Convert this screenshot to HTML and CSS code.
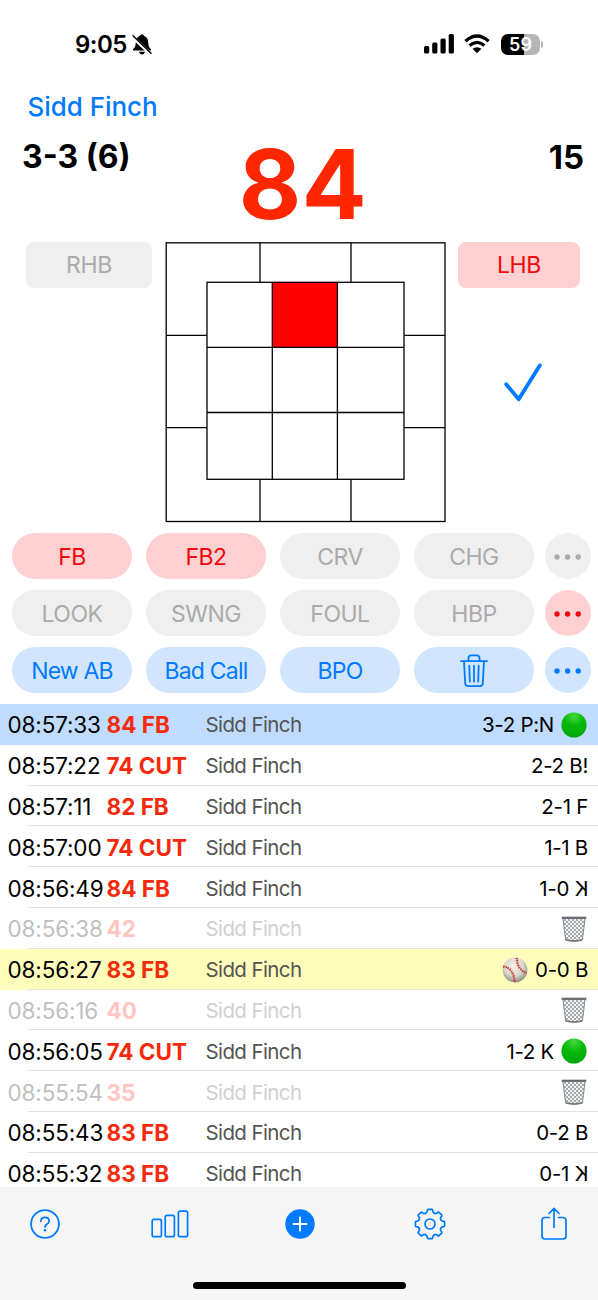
FILE: index.html
```
<!DOCTYPE html>
<html lang="en">
<head>
<meta charset="utf-8">
<title>Pitch Log</title>
<link rel="stylesheet" href="styles.css">
</head>
<body>
<svg width="0" height="0" class="defs">
  <defs>
    <radialGradient id="green" cx=".5" cy=".15" r=".85"><stop offset="0" stop-color="#45d83f"/><stop offset=".45" stop-color="#08b808"/><stop offset="1" stop-color="#00a80a"/></radialGradient>
    <radialGradient id="leather" cx=".45" cy=".35" r=".65"><stop offset="0" stop-color="#f4f2ea"/><stop offset=".6" stop-color="#d9d6ca"/><stop offset="1" stop-color="#8f8c80"/></radialGradient>
    <pattern id="mesh" width="4" height="4" patternUnits="userSpaceOnUse"><path d="M0 0L4 4M4 0L0 4" stroke="#8f9195" stroke-width=".75"/></pattern>
    <symbol id="dot" viewBox="0 0 26 26"><circle cx="13" cy="13" r="12.6" fill="url(#green)"/></symbol>
    <symbol id="basket" viewBox="0 0 26 26">
      <path d="M2 2H24L21.5 24Q13 26.5 4.5 24Z" fill="#f0f1f4"/>
      <path d="M2 2H24L21.5 24Q13 26.5 4.5 24Z" fill="url(#mesh)"/>
      <path d="M2 3L4.6 24Q13 26.3 21.4 24L24 3" fill="none" stroke="#85878c" stroke-width="1"/>
      <path d="M.7 1.8H25.3" stroke="#66686f" stroke-width="2.2"/>
      <path d="M5 24Q13 25.8 21 24" fill="none" stroke="#74767c" stroke-width="1.5"/>
    </symbol>
    <symbol id="ball" viewBox="0 0 26 26">
      <circle cx="13" cy="13" r="12.4" fill="url(#leather)"/>
      <g fill="none" stroke="#cc2f35" stroke-width=".7"><path d="M1.3 9.5Q11.5 10.5 12.7 25.3"/><path d="M14.8 .9Q15 12.5 24.7 16.2"/></g>
      <g fill="none" stroke="#cc2f35" stroke-width="2.6" stroke-dasharray=".9 1.5"><path d="M1.3 9.5Q11.5 10.5 12.7 25.3"/><path d="M14.8 .9Q15 12.5 24.7 16.2"/></g>
    </symbol>
  </defs>
</svg>
<div class="phone">
  <div class="status">
    <div class="clock"><span>9:05</span>
      <svg width="20" height="21" viewBox="0 0 20 21"><path d="M10 .5C11.3 .5 12 1.2 12.2 2C15.2 3 16 5.400 16.200 8.500C16.400 12 17 13.500 19 15.300V16.500H1V15.300C3 13.500 3.600 12 3.800 8.500C4 5.400 4.800 3 7.800 2C8 1.200 8.700 .500 10 .500Z"/><path d="M6.800 17.800H13.200Q12.400 20.500 10 20.500Q7.600 20.500 6.800 17.800Z"/><path d="M0 2.300L19 20.300" stroke="#fff" stroke-width="3.400"/><path d="M1 1.700L19 19.200" stroke="#000" stroke-width="1.500" stroke-linecap="round"/></svg>
    </div>
    <div class="signals">
      <svg width="30" height="20" viewBox="0 0 30 20"><rect x="0" y="12" width="5.200" height="7.500" rx="1.500"/><rect x="8.200" y="8.500" width="5.200" height="11" rx="1.500"/><rect x="16.500" y="4.500" width="5.200" height="15" rx="1.500"/><rect x="24.700" y="0" width="5.200" height="19.500" rx="1.500"/></svg>
      <svg width="26" height="20" viewBox="0 0 26 20"><g fill="none" stroke="#000" stroke-width="3.300"><path d="M1.400 7.200Q13 -3.100 24.600 7.200"/><path d="M5.500 11.500Q13 5.200 20.500 11.500"/></g><path d="M8.500 14.800Q13 11.600 17.500 14.800L13 19.200Z"/></svg>
      <div class="battery"><b>59</b><i></i></div>
    </div>
  </div>

  <div class="pitcher">Sidd Finch</div>

  <div class="score">
    <div class="record">3-3 (6)</div>
    <div class="speed">84</div>
    <div class="total">15</div>
  </div>

  <div class="zone">
    <div class="batter gray rhb"><span>RHB</span></div>
    <svg class="plate" width="281" height="281" viewBox="0 0 281 281">
      <rect x="107" y="40" width="65.500" height="65.500" fill="#f00"/>
      <g fill="none" stroke="#000" stroke-width="1.300">
        <rect x="1.200" y=".8" width="278.800" height="278.700"/>
        <rect x="42" y="40.300" width="197" height="197"/>
        <path d="M107.300 40.300V237.300M172.400 40.300V237.300M42 105.400H239M42 170.500H239"/>
        <path d="M95 .8V40.300M186 .8V40.300M95 237.300V279.500M186 237.300V279.500M1.200 93.300H42M1.200 185.600H42M239 93.300H280M239 185.600H280"/>
      </g>
    </svg>
    <div class="side">
      <div class="batter red"><span>LHB</span></div>
      <svg class="check" width="40" height="40" viewBox="0 0 40 40"><path d="M3.200 22.200L15.700 37.300L36.800 3.400" fill="none" stroke="#007aff" stroke-width="3.800" stroke-linecap="round" stroke-linejoin="round"/></svg>
    </div>
  </div>

  <div class="pad">
    <button class="red">FB</button><button class="red">FB2</button><button class="gray">CRV</button><button class="gray">CHG</button>
    <button class="gray more"><svg width="28" height="6"><circle cx="3" cy="3" r="2.700"/><circle cx="13.600" cy="3" r="2.700"/><circle cx="24.200" cy="3" r="2.700"/></svg></button>
    <button class="gray">LOOK</button><button class="gray">SWNG</button><button class="gray">FOUL</button><button class="gray">HBP</button>
    <button class="red more"><svg width="28" height="6"><circle cx="3" cy="3" r="2.700"/><circle cx="13.600" cy="3" r="2.700"/><circle cx="24.200" cy="3" r="2.700"/></svg></button>
    <button class="blue">New AB</button><button class="blue">Bad Call</button><button class="blue">BPO</button>
    <button class="blue"><svg class="bin" width="28" height="34" viewBox="0 0 28 34"><g fill="none" stroke="#007aff" stroke-width="1.800" stroke-linecap="round" stroke-linejoin="round"><path d="M1 7.200H27M8.500 7V4Q8.500 1.300 11.200 1.300H16.800Q19.500 1.300 19.500 4V7M4 7.200L5.200 29.300Q5.400 32.200 8.200 32.200H19.800Q22.600 32.200 22.800 29.300L24 7.200M9.300 11.700L9.800 27.500M14 11.700V27.500M18.700 11.700L18.200 27.500"/></g></svg></button>
    <button class="blue more"><svg width="28" height="6"><circle cx="3" cy="3" r="2.700"/><circle cx="13.600" cy="3" r="2.700"/><circle cx="24.200" cy="3" r="2.700"/></svg></button>
  </div>

  <div class="log">
    <div class="row selected"><span class="time">08:57:33</span><span class="pitch">84 FB</span><span class="name">Sidd Finch</span><span class="result">3-2 P:N</span><svg class="emoji"><use href="#dot"/></svg></div>
    <div class="row"><span class="time">08:57:22</span><span class="pitch">74 CUT</span><span class="name">Sidd Finch</span><span class="result">2-2 B!</span></div>
    <div class="row"><span class="time">08:57:11</span><span class="pitch">82 FB</span><span class="name">Sidd Finch</span><span class="result">2-1 F</span></div>
    <div class="row"><span class="time">08:57:00</span><span class="pitch">74 CUT</span><span class="name">Sidd Finch</span><span class="result">1-1 B</span></div>
    <div class="row"><span class="time">08:56:49</span><span class="pitch">84 FB</span><span class="name">Sidd Finch</span><span class="result">1-0 <span class="flip">K</span></span></div>
    <div class="row deleted"><span class="time">08:56:38</span><span class="pitch">42</span><span class="name">Sidd Finch</span><svg class="emoji"><use href="#basket"/></svg></div>
    <div class="row start"><span class="time">08:56:27</span><span class="pitch">83 FB</span><span class="name">Sidd Finch</span><svg class="emoji"><use href="#ball"/></svg><span class="result">0-0 B</span></div>
    <div class="row deleted"><span class="time">08:56:16</span><span class="pitch">40</span><span class="name">Sidd Finch</span><svg class="emoji"><use href="#basket"/></svg></div>
    <div class="row"><span class="time">08:56:05</span><span class="pitch">74 CUT</span><span class="name">Sidd Finch</span><span class="result">1-2 K</span><svg class="emoji"><use href="#dot"/></svg></div>
    <div class="row deleted"><span class="time">08:55:54</span><span class="pitch">35</span><span class="name">Sidd Finch</span><svg class="emoji"><use href="#basket"/></svg></div>
    <div class="row"><span class="time">08:55:43</span><span class="pitch">83 FB</span><span class="name">Sidd Finch</span><span class="result">0-2 B</span></div>
    <div class="row"><span class="time">08:55:32</span><span class="pitch">83 FB</span><span class="name">Sidd Finch</span><span class="result">0-1 <span class="flip">K</span></span></div>
  </div>

  <div class="toolbar">
    <div class="tools">
      <svg width="30" height="34" viewBox="0 0 30 34"><circle cx="15" cy="17" r="13.900" fill="none" stroke="#007aff" stroke-width="1.800"/><path d="M10.900 14.300C11 11.700 12.700 10.400 15 10.400C17.400 10.400 19.100 11.800 19.100 13.900C19.100 15.600 18.100 16.500 16.800 17.300C15.600 18.100 15.100 18.700 15.100 20" fill="none" stroke="#007aff" stroke-width="1.800" stroke-linecap="round"/><circle cx="15" cy="23.200" r="1.250" fill="#007aff"/></svg>
      <svg width="38" height="34" viewBox="0 0 38 34"><g fill="none" stroke="#007aff" stroke-width="1.700"><rect x="1.200" y="12.400" width="9.200" height="17.300" rx="1.800"/><rect x="14.200" y="8.300" width="9.200" height="21.400" rx="1.800"/><rect x="27.400" y="4.200" width="9.200" height="25.500" rx="1.800"/></g></svg>
      <svg width="30" height="34" viewBox="0 0 30 34"><circle cx="15" cy="17" r="14.700" fill="#007aff"/><path d="M8.500 17H21.500M15 10.500V23.500" stroke="#fff" stroke-width="2" stroke-linecap="round"/></svg>
      <svg width="32" height="34" viewBox="-16 -17 32 34"><defs><path id="tooth" d="M-4.440 -10.720C-3.300 -11.150 -3.100 -11.500 -2.900 -12.400L-2.600 -14Q-2.450 -14.600 -1.800 -14.600H1.800Q2.450 -14.600 2.600 -14L2.900 -12.400C3.100 -11.500 3.300 -11.150 4.440 -10.720"/></defs><g fill="none" stroke="#007aff" stroke-width="1.700" stroke-linecap="round"><use href="#tooth"/><use href="#tooth" transform="rotate(45)"/><use href="#tooth" transform="rotate(90)"/><use href="#tooth" transform="rotate(135)"/><use href="#tooth" transform="rotate(180)"/><use href="#tooth" transform="rotate(225)"/><use href="#tooth" transform="rotate(270)"/><use href="#tooth" transform="rotate(315)"/><circle r="5"/></g></svg>
      <svg width="28" height="34" viewBox="0 0 28 34"><g fill="none" stroke="#007aff" stroke-width="1.700" stroke-linecap="round" stroke-linejoin="round"><path d="M9.500 10.500H5Q2 10.500 2 13.500V29Q2 32 5 32H23Q26 32 26 29V13.500Q26 10.500 23 10.500H18.500M14 20.500V1.500M9 6.500L14 1.300L19 6.500"/></g></svg>
    </div>
    <div class="home"></div>
  </div>
</div>
</body>
</html>
```
FILE: styles.css
```
* { box-sizing: border-box; }
body { margin: 0; background: #fff; font-family: Inter, "Liberation Sans", sans-serif; color: #000; }
.defs { display: block; }
svg { flex: none; }
.phone { width: 598px; height: 1300px; display: flex; flex-direction: column; overflow: hidden; white-space: nowrap; }

.status { height: 88px; padding: 0 55px 0 75px; display: flex; justify-content: space-between; align-items: center; }
.clock { display: flex; align-items: center; gap: 5px; font-size: 24px; font-weight: 600; letter-spacing: -0.5px; }
.signals { display: flex; align-items: center; gap: 10px; }
.battery { display: flex; align-items: center; gap: 1px; margin-left: 1px; }
.battery b { width: 39px; height: 21px; border-radius: 7px; background: linear-gradient(90deg, #000 59%, #b5b5b5 59%); color: #fff; font-size: 18px; font-weight: 600; line-height: 21px; text-align: center; }
.battery i { width: 2px; height: 7px; border-radius: 0 3px 3px 0; background: #b5b5b5; }

.pitcher { height: 38px; padding-left: 27.500px; line-height: 38px; font-size: 26px; font-weight: 500; letter-spacing: -0.050px; color: #007aff; }

.score { height: 116px; display: grid; grid-template-columns: 1fr auto 1fr; padding: 0 14px 0 22px; line-height: 61px; font-size: 32px; font-weight: 700; }
.speed { font-size: 96px; line-height: 116px; letter-spacing: 0.500px; color: #ff2600; }
.total { text-align: right; font-size: 33px; line-height: 62px; }

.zone { height: 291px; display: flex; align-items: flex-start; padding-left: 26px; }
.batter { height: 46px; border-radius: 8px; display: flex; align-items: center; justify-content: center; font-size: 23px; letter-spacing: -0.300px; }
.rhb { width: 126px; }
.plate { margin-left: 13px; }
.side { width: 122px; margin-left: 12px; }
.check { display: block; margin: 74px 0 0 45px; }

.gray { background: #efefef; color: #aaa; }
.red { background: #ffd0d1; color: #f0090b; }
.blue { background: #d1e5ff; color: #007aff; }

.pad { height: 171px; display: grid; grid-template-columns: 120px 134px 134px 134px 46px; grid-auto-rows: 46px; row-gap: 11px; padding-left: 12px; }
.pad button { border: 0; border-radius: 23px; padding: 1px 0 0; width: 120px; font: 400 23px Inter, "Liberation Sans", sans-serif; letter-spacing: -0.500px; display: flex; align-items: center; justify-content: center; justify-self: end; }
.pad .blue { letter-spacing: -0.800px; }
.pad .more { width: 46px; margin-right: -11px; }
.more svg { fill: currentColor; }

.log { height: 483px; overflow: hidden; }
.row { height: 40.8px; padding: 1px 10px 0 7.500px; display: flex; align-items: center; background: linear-gradient(#e2e2e4, #e2e2e4) 28px 100% / 100% 1px no-repeat; }
.time { width: 99px; font-size: 22.500px; letter-spacing: -0.150px; }
.pitch { width: 99px; font-size: 22.500px; font-weight: 700; color: #f52a0a; }
.name { flex: 1; font-size: 20.500px; letter-spacing: -0.600px; color: #555; }
.result { font-size: 20.500px; letter-spacing: -0.300px; }
.emoji { width: 26px; height: 26px; margin-left: 7px; }
.row > .emoji:last-child { margin-right: 1px; }
.emoji + .result { margin-left: 7px; }
.flip { display: inline-block; transform: scaleX(-1); }
.selected { background: #bfdcff; }
.start { background-color: #fffdbb; }
.deleted .time { color: #bfbfbf; }
.deleted .pitch { color: #ffc5c0; }
.deleted .name { color: #d0d0d0; }

.toolbar { height: 113px; background: #f6f6f7; display: flex; flex-direction: column; align-items: center; justify-content: space-between; padding: 20px 0 11px; }
.tools { width: 598px; display: grid; grid-template-columns: 121.500px 134px 128.500px 126.500px 28px; padding-left: 29.500px; }
.home { width: 213px; height: 7px; border-radius: 4px; background: #000; }
```
